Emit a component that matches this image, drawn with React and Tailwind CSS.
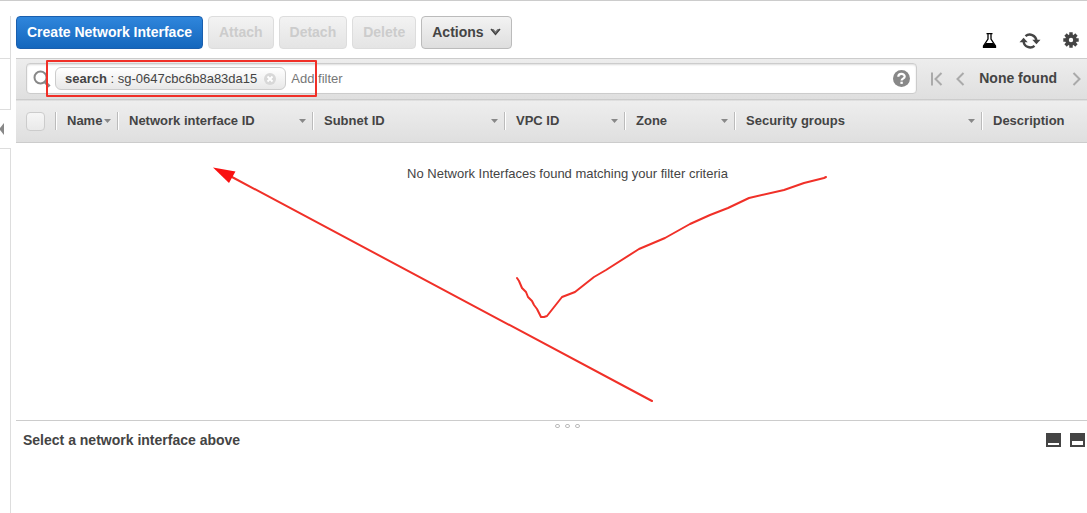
/**
 * FILE_GUIDE: App.jsx — network interfaces list (toolbar, filter bar, table, details panel)
 */

const columns = [
  { label: 'Name', width: 'w-[62px]', sortable: true },
  { label: 'Network interface ID', width: 'w-[195px]', sortable: true },
  { label: 'Subnet ID', width: 'w-[192px]', sortable: true },
  { label: 'VPC ID', width: 'w-[120px]', sortable: true },
  { label: 'Zone', width: 'w-[110px]', sortable: true },
  { label: 'Security groups', width: 'w-[247px]', sortable: true },
  { label: 'Description', width: '', sortable: false },
];

function FlaskIcon() {
  return (
    <svg width="16" height="17" viewBox="0 0 16 17" aria-hidden="true">
      <path d="M5.500 1.700h6M7 2v5L2.500 14v1.300h12V14L10 7V2" fill="none" stroke="#000" strokeWidth="1.300" />
      <path d="M5 11h7l3 3.500V16H2v-1.500z" fill="#000" />
    </svg>
  );
}

function RefreshIcon() {
  return (
    <svg width="22" height="18" viewBox="0 0 22 18" aria-hidden="true">
      <path d="M6.500 5.200A6.600 6.600 0 0 1 17.400 9.500" fill="none" stroke="#444" strokeWidth="2.400" />
      <path d="M15.500 14.800A6.600 6.600 0 0 1 4.600 10.500" fill="none" stroke="#444" strokeWidth="2.400" />
      <path d="M13.300 8.800h8.200l-4.100 4.400z" fill="#444" />
      <path d="M.5 11.200h8.200L4.600 6.800z" fill="#444" />
    </svg>
  );
}

function GearIcon() {
  return (
    <svg width="16" height="16" viewBox="0 0 16 16" aria-hidden="true">
      <circle cx="8" cy="8" r="4" fill="none" stroke="#444" strokeWidth="3.600" />
      {[0, 45, 90, 135].map((angle) => (
        <path
          key={angle}
          d="M6.300 .3h3.400v3H6.300zM6.300 12.700h3.400v3H6.300z"
          fill="#444"
          transform={`rotate(${angle} 8 8)`}
        />
      ))}
    </svg>
  );
}

function SearchIcon() {
  return (
    <svg width="18" height="18" viewBox="0 0 18 18" className="shrink-0" aria-hidden="true">
      <circle cx="7.500" cy="7.500" r="6" fill="none" stroke="#888" strokeWidth="2" />
      <path d="M12 12l4.500 4.500" stroke="#888" strokeWidth="3" />
    </svg>
  );
}

function ToolbarButton({ children, disabled }) {
  return (
    <button
      type="button"
      disabled={disabled}
      className="flex h-[33px] items-center gap-1.5 rounded border border-[#bbb] bg-linear-to-b from-[#f3f3f3] to-[#dedede] px-[10px] text-[14px] font-bold text-[#444] disabled:border-[#ddd] disabled:from-[#f3f3f3] disabled:to-[#e4e4e4] disabled:text-[#ccc]"
    >
      {children}
    </button>
  );
}

function Toolbar() {
  return (
    <div className="flex justify-between pb-[9px]">
      <div className="flex gap-[5px]">
        <button
          type="button"
          className="h-[33px] rounded border border-[#1a5fae] bg-linear-to-b from-[#2f86dc] to-[#1467bd] px-[10px] text-[14px] font-bold text-white"
        >
          Create Network Interface
        </button>
        <ToolbarButton disabled>Attach</ToolbarButton>
        <ToolbarButton disabled>Detach</ToolbarButton>
        <ToolbarButton disabled>Delete</ToolbarButton>
        <ToolbarButton>
          Actions
          <svg width="11" height="10" viewBox="0 0 11 10" aria-hidden="true">
            <path d="M.5 1h3l2 2.200L7.500 1h3l-5 6z" fill="#777" />
            <path d="M1 1l4.500 5.500L10 1" fill="none" stroke="#444" strokeWidth="1.200" />
          </svg>
        </ToolbarButton>
      </div>
      <div className="flex items-end gap-[22px] pr-2">
        <button type="button" aria-label="Experiments"><FlaskIcon /></button>
        <button type="button" aria-label="Refresh"><RefreshIcon /></button>
        <button type="button" aria-label="Settings" className="pb-px"><GearIcon /></button>
      </div>
    </div>
  );
}

function FilterBar() {
  return (
    <div className="flex items-center border-t border-[#ccc] bg-linear-to-b from-[#ededed] to-[#dfdfdf] pb-[5px] pl-[10px] pt-1">
      {/* --- Search box with the active filter --- */}
      <div className="flex h-[31px] flex-1 items-center rounded border border-[#ccc] bg-white pl-[6px] pr-[6px] shadow-[inset_0_1px_2px_#ddd]">
        <SearchIcon />
        <span className="ml-1 flex h-[23px] shrink-0 items-center rounded-md border border-[#ccc] bg-linear-to-b from-white to-[#e8e8e8] pl-[9px] pr-[9px] text-[13px] text-[#444]">
          <strong>search</strong>
          <span className="whitespace-pre"> : sg-0647cbc6b8a83da15</span>
          <button type="button" aria-label="Remove filter" className="ml-[7px]">
            <svg width="12" height="12" viewBox="0 0 12 12" aria-hidden="true">
              <circle cx="6" cy="6" r="6" fill="#d8d8d8" />
              <path d="M3.500 3.500l5 5M8.500 3.500l-5 5" stroke="#fff" strokeWidth="1.800" />
            </svg>
          </button>
        </span>
        <input
          type="text"
          aria-label="Add filter"
          placeholder="Add filter"
          className="ml-[5px] min-w-0 flex-1 bg-transparent text-[13px] text-[#444] outline-none placeholder:text-[#777]"
        />
        <button type="button" aria-label="Help">
          <svg width="17" height="17" viewBox="0 0 17 17" aria-hidden="true">
            <circle cx="8.500" cy="8.500" r="8.500" fill="#888" />
            <path d="M5.300 6.700C5.300 3 11.700 3 11.700 6.500c0 2.200-3.100 2-3.100 4" fill="none" stroke="#fff" strokeWidth="2.200" />
            <path d="M7.400 11.700h2.400v2.200H7.400z" fill="#fff" />
          </svg>
        </button>
      </div>
      {/* --- Pager --- */}
      <div className="flex items-center pl-[14px] pr-[6px] text-[14px] font-bold text-[#444]">
        <button type="button" aria-label="First page">
          <svg width="12" height="14" viewBox="0 0 12 14" fill="none" stroke="#aaa" strokeWidth="2" aria-hidden="true">
            <path d="M1 .5v13M10.500 1l-6 6 6 6" />
          </svg>
        </button>
        <button type="button" aria-label="Previous page" className="ml-[13px]">
          <svg width="9" height="14" viewBox="0 0 9 14" fill="none" stroke="#aaa" strokeWidth="2" aria-hidden="true">
            <path d="M7.500 1l-6 6 6 6" />
          </svg>
        </button>
        <span className="ml-[14px] mr-[15px] whitespace-nowrap">None found</span>
        <button type="button" aria-label="Next page">
          <svg width="9" height="14" viewBox="0 0 9 14" fill="none" stroke="#aaa" strokeWidth="2" aria-hidden="true">
            <path d="M1.500 1l6 6-6 6" />
          </svg>
        </button>
      </div>
    </div>
  );
}

function InterfacesTable() {
  return (
    <table className="w-full table-fixed border-collapse text-[13px] text-[#444]">
      <thead>
        <tr className="h-[43px] border-y border-[#ccc] bg-linear-to-b from-[#eee] to-[#dfdfdf]">
          <th className="w-[39px] p-0 pl-[10px] text-left">
            <input
              type="checkbox"
              aria-label="Select all"
              className="block size-[19px] appearance-none rounded border border-[#ccc] bg-linear-to-b from-[#f6f6f6] to-[#eaeaea]"
            />
          </th>
          {columns.map((col) => (
            <th key={col.label} className={`${col.width} p-0 text-left font-bold`}>
              <div className="flex h-[18px] items-center justify-between border-l border-[#bbb] pr-[6px] shadow-[inset_1px_0_0_#fff]">
                <span className="whitespace-nowrap pl-[11px]">{col.label}</span>
                {col.sortable && (
                  <svg width="7" height="4" viewBox="0 0 7 4" className="shrink-0" aria-hidden="true">
                    <path d="M0 0h7L3.500 4z" fill="#888" />
                  </svg>
                )}
              </div>
            </th>
          ))}
        </tr>
      </thead>
      <tbody>
        <tr>
          <td colSpan={8} className="pl-8 pt-[21px] text-center leading-5">
            No Network Interfaces found matching your filter criteria
          </td>
        </tr>
      </tbody>
    </table>
  );
}

function DetailsPanel() {
  return (
    <section className="h-[93px] border-t border-[#ccc]">
      {/* Drag handle */}
      <div className="flex h-[10px] items-center justify-center gap-[5px] pl-8">
        {[0, 1, 2].map((dot) => (
          <span key={dot} className="h-1 w-[5px] rounded-full border border-[#bbb]" />
        ))}
      </div>
      <div className="flex items-center justify-between pl-[7px] pr-[2px]">
        <h2 className="text-[14px] font-bold leading-[18px] text-[#444]">Select a network interface above</h2>
        <div className="flex gap-[9px]">
          <button type="button" aria-label="Collapse panel">
            <svg width="15" height="14" viewBox="0 0 15 14" aria-hidden="true">
              <path d="M0 0h15v14H0z" fill="#444" />
              <path d="M2 10h11v2H2z" fill="#fff" />
            </svg>
          </button>
          <button type="button" aria-label="Split panel">
            <svg width="15" height="14" viewBox="0 0 15 14" aria-hidden="true">
              <path d="M0 0h15v14H0z" fill="#444" />
              <path d="M2 8h11v4H2z" fill="#fff" />
            </svg>
          </button>
        </div>
      </div>
    </section>
  );
}

/* Collapsed side navigation with its toggle */
function SideRail() {
  return (
    <aside className="flex w-[11px] shrink-0 flex-col">
      <div className="h-[42px] border-r border-[#ddd]" />
      <div className="h-[52px] border-y border-r border-[#ddd]" />
      <button type="button" aria-label="Expand navigation" className="flex h-[38px] items-center">
        <svg width="4" height="12" viewBox="0 0 4 12" aria-hidden="true">
          <path d="M4 0v12L0 7V5z" fill="#888" />
        </svg>
      </button>
      <div className="flex-1 border-r border-t border-[#ddd]" />
    </aside>
  );
}

/* Red pen marks drawn on top of the page */
function Annotations() {
  return (
    <svg
      width="1087"
      height="512"
      viewBox="0 1 1087 512"
      className="pointer-events-none absolute left-0 top-0 max-w-none"
      fill="none"
      stroke="#f03028"
      strokeWidth="2"
      strokeLinejoin="round"
      strokeLinecap="round"
      aria-hidden="true"
    >
      <path d="M47 61h269v35H47z" />
      <path d="M652 401L232 177" />
      <path d="M213 167.500l22.500 4-6.500 11.500z" fill="#f91010" stroke="none" />
      <path d="M517 278l2 3 3 7 4 4 2 5 4 4 2 4 3 4 4 8h3l3-1 15-19 13-5 19-15 12-7 33-21 26-11 25-14 20-9 18-7 21-10 35-8 20-7 20-5 2-1" />
    </svg>
  );
}

function App() {
  return (
    <div className="relative flex min-h-screen overflow-hidden border-t border-[#ccc] bg-white pt-[15px] font-['Liberation_Sans',Arial,sans-serif]">
      <SideRail />
      <main className="flex min-w-0 flex-1 flex-col pl-[5px]">
        <Toolbar />
        <FilterBar />
        <div className="flex-1">
          <InterfacesTable />
        </div>
        <DetailsPanel />
      </main>
      <Annotations />
    </div>
  );
}

export default App;
